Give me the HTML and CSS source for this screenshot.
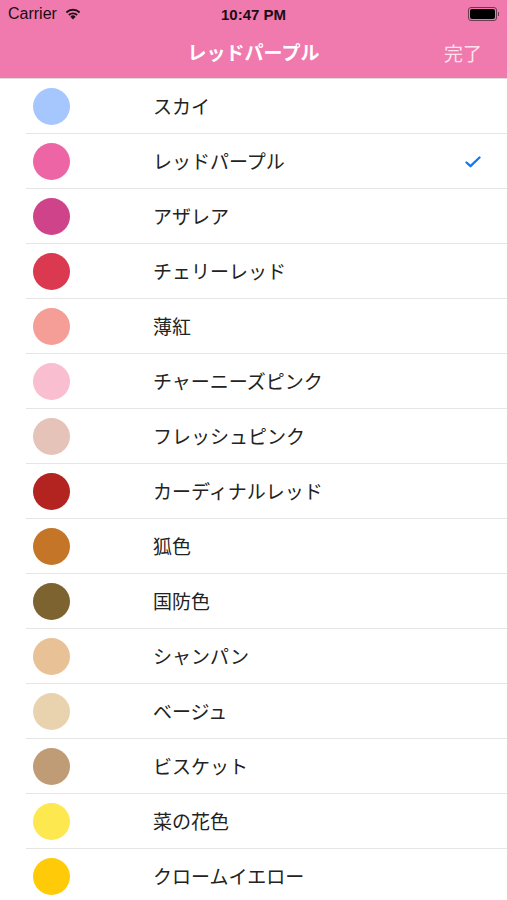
FILE: index.html
```html
<!DOCTYPE html>
<html lang="ja">
<head>
    <meta charset="UTF-8">
    <meta name="viewport" content="width=device-width, initial-scale=1.0">
    <title>レッドパープル</title>
    <link rel="stylesheet" href="styles.css">
</head>
<body>

    <!-- Status bar + navigation -->
    <div class="top-bar">
        <div class="status-bar">
            <div class="carrier">
                Carrier
                <svg class="wifi" width="18" height="13" viewBox="0 0 16 12">
                    <path d="M8 11.5 L5.6 8.9 A3.4 3.4 0 0 1 10.4 8.9 Z" fill="#1c0c14"/>
                    <path d="M3.6 6.8 A6.3 6.3 0 0 1 12.4 6.8 L11.2 8.1 A4.6 4.6 0 0 0 4.8 8.1 Z" fill="#1c0c14"/>
                    <path d="M1.3 4.4 A9.6 9.6 0 0 1 14.7 4.4 L13.5 5.7 A7.9 7.9 0 0 0 2.5 5.7 Z" fill="#1c0c14"/>
                </svg>
            </div>
            <div class="clock">10:47 PM</div>
            <div class="battery">
                <span class="battery-body"><span class="battery-fill"></span></span>
                <span class="battery-tip"></span>
            </div>
        </div>
        <div class="nav-bar">
            <span class="nav-title">レッドパープル</span>
            <span class="nav-done">完了</span>
        </div>
    </div>

    <!-- Colour list -->
    <ul class="color-list">
        <li><span class="swatch" style="background:#A6C7FE"></span><span class="name">スカイ</span></li>
        <li><span class="swatch" style="background:#EE65A5"></span><span class="name">レッドパープル</span>
            <svg class="check" width="16" height="12" viewBox="0 0 16 12">
                <path d="M1.5 6.5 L5.5 10.2 L14.5 1.5" fill="none" stroke="#1478EE" stroke-width="2.3" stroke-linecap="round" stroke-linejoin="round"/>
            </svg>
        </li>
        <li><span class="swatch" style="background:#CF438B"></span><span class="name">アザレア</span></li>
        <li><span class="swatch" style="background:#DA3950"></span><span class="name">チェリーレッド</span></li>
        <li><span class="swatch" style="background:#F59D97"></span><span class="name">薄紅</span></li>
        <li><span class="swatch" style="background:#FABED1"></span><span class="name">チャーニーズピンク</span></li>
        <li><span class="swatch" style="background:#E5C3B9"></span><span class="name">フレッシュピンク</span></li>
        <li><span class="swatch" style="background:#B3231F"></span><span class="name">カーディナルレッド</span></li>
        <li><span class="swatch" style="background:#C47527"></span><span class="name">狐色</span></li>
        <li><span class="swatch" style="background:#7D6330"></span><span class="name">国防色</span></li>
        <li><span class="swatch" style="background:#E8C196"></span><span class="name">シャンパン</span></li>
        <li><span class="swatch" style="background:#E9D3AF"></span><span class="name">ベージュ</span></li>
        <li><span class="swatch" style="background:#C09C76"></span><span class="name">ビスケット</span></li>
        <li><span class="swatch" style="background:#FDE84F"></span><span class="name">菜の花色</span></li>
        <li><span class="swatch" style="background:#FFCA08"></span><span class="name">クロームイエロー</span></li>
    </ul>

</body>
</html>
```

FILE: styles.css
```css
/* General Styling */
body {
    margin: 0;
    background: #FFFFFF;
    font-family: "Noto Sans CJK JP", "Noto Sans", sans-serif;
    overflow: hidden;
}

.top-bar {
    background: #F07AAE;
    border-bottom: 1px solid #E2D9DD;
    height: 78px;
}

.status-bar {
    height: 27px;
    display: flex;
    align-items: center;
    justify-content: space-between;
    padding: 0 8px;
    color: #1c0c14;
    font-family: "Liberation Sans", Arial, sans-serif;
    font-size: 15px;
    position: relative;
}

.carrier {
    display: flex;
    align-items: center;
    gap: 7px;
    padding-top: 1px;
    font-size: 16px;
}

.wifi {
    margin-top: -2px;
}

.clock {
    position: absolute;
    left: 0;
    right: 0;
    text-align: center;
    font-weight: bold;
    padding-top: 1px;
}

.battery {
    display: flex;
    align-items: center;
    padding-right: 0;
}

.battery-body {
    width: 25px;
    height: 10px;
    border: 1px solid #6b3a50;
    border-radius: 3px;
    padding: 1px;
    display: flex;
}

.battery-fill {
    flex: 1;
    background: #000;
    border-radius: 2px;
}

.battery-tip {
    width: 1.5px;
    height: 4px;
    background: #6b3a50;
    margin-left: 1px;
}

.nav-bar {
    height: 51px;
    display: flex;
    align-items: center;
    justify-content: center;
    position: relative;
    color: #FFFFFF;
}

.nav-title {
    font-size: 19px;
    font-weight: bold;
    padding-bottom: 2px;
}

.nav-done {
    position: absolute;
    right: 25px;
    top: 12px;
    font-size: 19px;
    color: #FDE3EE;
}

.color-list {
    list-style: none;
    margin: 0;
    padding: 0;
}

.color-list li {
    height: 54px;
    margin-left: 26px;
    border-bottom: 1px solid #E6E6E6;
    display: flex;
    align-items: center;
    position: relative;
}

.swatch {
    width: 37px;
    height: 37px;
    border-radius: 50%;
    margin-left: 7px;
    flex-shrink: 0;
}

.name {
    margin-left: 83px;
    font-size: 19px;
    color: #222222;
    padding-bottom: 2px;
}

.check {
    position: absolute;
    right: 26px;
    top: 22px;
}
```
